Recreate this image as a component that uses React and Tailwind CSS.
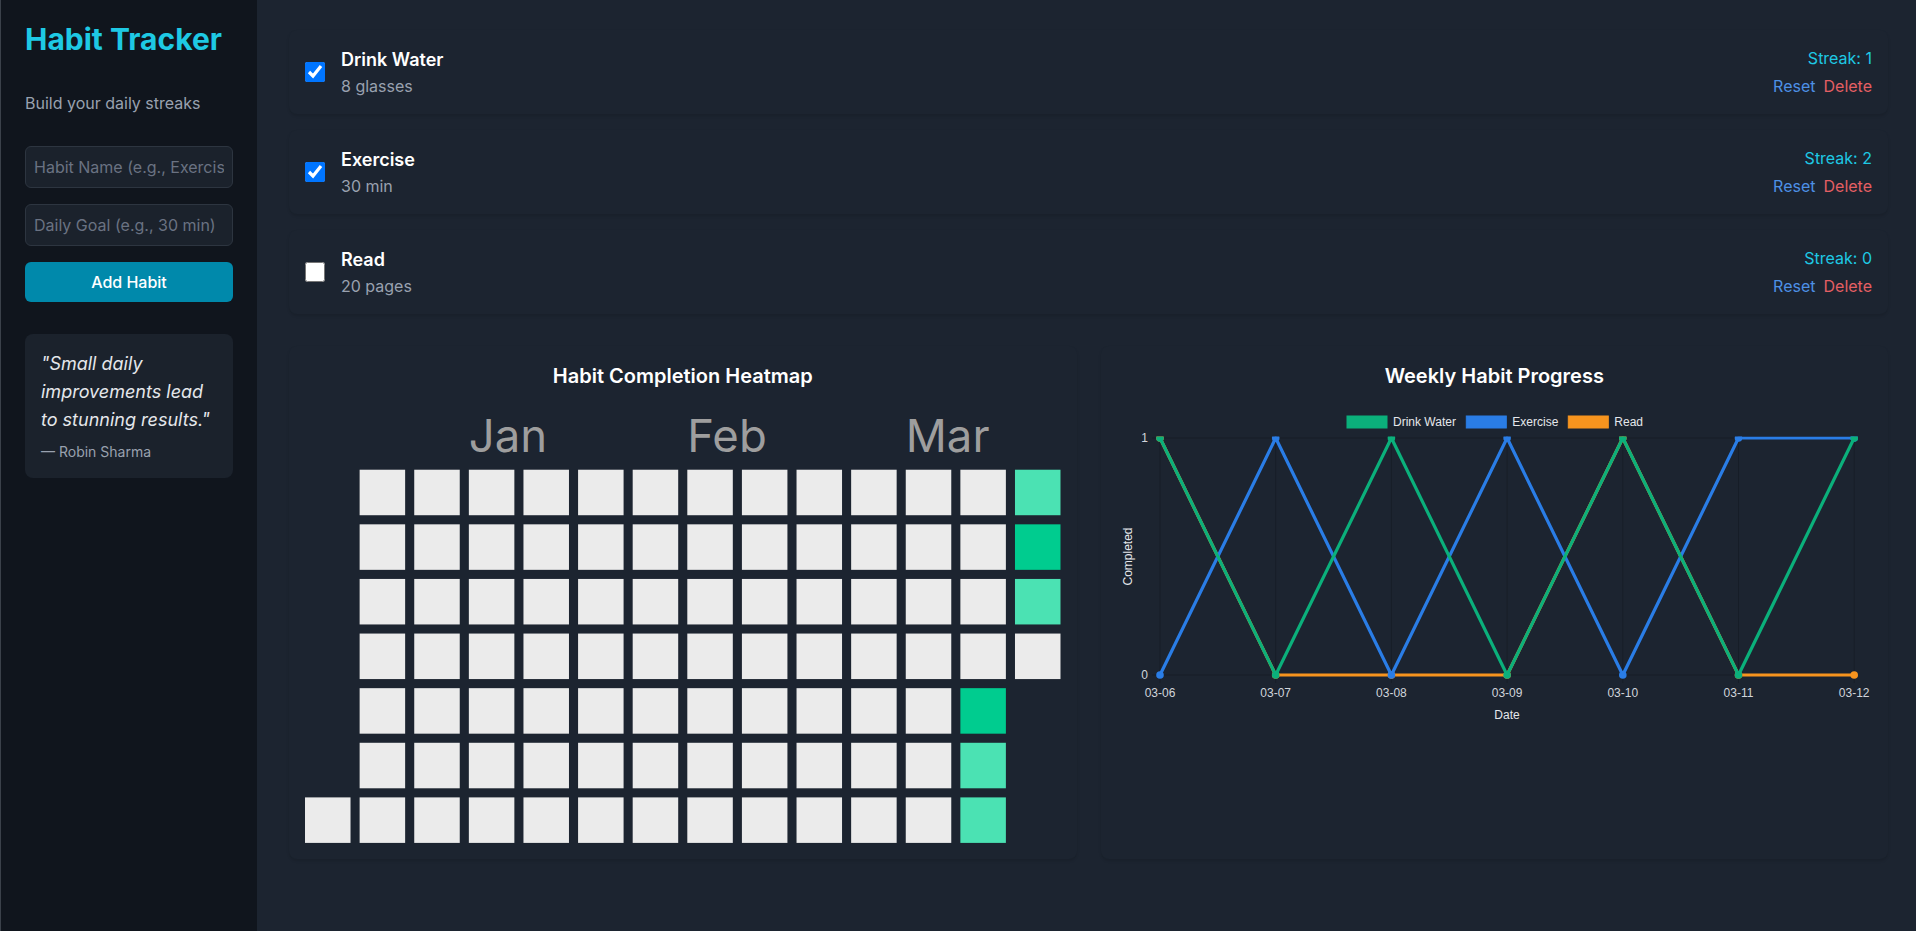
import React, { useState } from "react";

const initialHabits = [
    { id: 1, name: "Drink Water", goal: "8 glasses", streak: 1, done: true },
    { id: 2, name: "Exercise", goal: "30 min", streak: 2, done: true },
    { id: 3, name: "Read", goal: "20 pages", streak: 0, done: false },
];

// heatmap: 14 week columns, 7 day rows
const greens = {
    "12-4": "#00cc8f",
    "12-5": "#4be2b3",
    "12-6": "#4be2b3",
    "13-0": "#4be2b3",
    "13-1": "#00cc8f",
    "13-2": "#4be2b3",
};

const Heatmap = () => {
    const cells = [];
    for (let col = 0; col < 14; col++) {
        for (let row = 0; row < 7; row++) {
            if (col === 0 && row < 6) continue;
            if (col === 13 && row > 3) continue;
            cells.push(
                <rect
                    key={`${col}-${row}`}
                    x={col * 12}
                    y={14 + row * 12}
                    width="10"
                    height="10"
                    fill={greens[`${col}-${row}`] || "#ebebeb"}
                />
            );
        }
    }
    return (
        <svg viewBox="0 0 166 96" className="block w-full">
            <text x="36" y="10" fontSize="10" fill="#9e9e9e">Jan</text>
            <text x="84" y="10" fontSize="10" fill="#9e9e9e">Feb</text>
            <text x="132" y="10" fontSize="10" fill="#9e9e9e">Mar</text>
            {cells}
        </svg>
    );
};

const dates = ["03-06", "03-07", "03-08", "03-09", "03-10", "03-11", "03-12"];
const xs = dates.map((_, i) => 43 + i * 115.7);
const yOf = (v) => (v ? 32 : 269);

const series = [
    { label: "Read", color: "#f7941e", data: [1, 0, 0, 0, 1, 0, 0] },
    { label: "Exercise", color: "#2a7de6", data: [0, 1, 0, 1, 0, 1, 1] },
    { label: "Drink Water", color: "#0bb07b", data: [1, 0, 1, 0, 1, 0, 1] },
];

const legend = [
    { label: "Drink Water", color: "#0bb07b", x: 230 },
    { label: "Exercise", color: "#2a7de6", x: 349.3 },
    { label: "Read", color: "#f7941e", x: 451.3 },
];

const LineChart = () => (
    <svg width="756" height="378" viewBox="0 0 756 378" className="block" fontFamily="'Liberation Sans', Arial, sans-serif">
        <defs>
            <clipPath id="plotclip">
                <rect x="0" y="30.5" width="756" height="340" />
            </clipPath>
        </defs>
        {/* legend */}
        {legend.map((l) => (
            <g key={l.label}>
                <rect x={l.x} y="10" width="40" height="12" fill={l.color} stroke={l.color} strokeWidth="1" />
                <text x={l.x + 46} y="16" dominantBaseline="central" fontSize="12" fill="#e5e7eb">{l.label}</text>
            </g>
        ))}
        {/* grid */}
        {xs.map((x) => (
            <line key={x} x1={x} x2={x} y1="32" y2="277" stroke="rgba(0,0,0,0.18)" strokeWidth="1" />
        ))}
        <line x1="35" x2="737.2" y1="32" y2="32" stroke="rgba(0,0,0,0.18)" />
        <line x1="35" x2="737.2" y1="269" y2="269" stroke="rgba(0,0,0,0.18)" />
        {/* y ticks */}
        <text x="31" y="32" textAnchor="end" dominantBaseline="central" fontSize="12" fill="#d1d5db">1</text>
        <text x="31" y="269" textAnchor="end" dominantBaseline="central" fontSize="12" fill="#d1d5db">0</text>
        <text
            x="10.7"
            y="150.5"
            textAnchor="middle"
            dominantBaseline="central"
            fontSize="12"
            fill="#e5e7eb"
            transform="rotate(-90 10.7 150.5)"
        >
            Completed
        </text>
        {/* x ticks */}
        {dates.map((d, i) => (
            <text key={d} x={xs[i]} y="287" textAnchor="middle" dominantBaseline="central" fontSize="12" fill="#d1d5db">{d}</text>
        ))}
        <text x="390" y="309" textAnchor="middle" dominantBaseline="central" fontSize="12" fill="#e5e7eb">Date</text>
        {/* data */}
        <g clipPath="url(#plotclip)">
            {series.map((s) => (
                <g key={s.label}>
                    <polyline
                        points={s.data.map((v, i) => `${xs[i]},${yOf(v)}`).join(" ")}
                        fill="none"
                        stroke={s.color}
                        strokeWidth="3.2"
                        strokeLinejoin="round"
                    />
                    {s.data.map((v, i) => (
                        <circle key={i} cx={xs[i]} cy={yOf(v)} r="3.8" fill={s.color} />
                    ))}
                </g>
            ))}
        </g>
    </svg>
);

const App = () => {
    const [habits, setHabits] = useState(initialHabits);
    const [name, setName] = useState("");
    const [goal, setGoal] = useState("");

    const toggle = (id) => {
        setHabits((prev) => prev.map((h) => (h.id === id ? { ...h, done: !h.done } : h)));
    };

    const addHabit = () => {
        if (!name.trim()) return;
        setHabits((prev) => [...prev, { id: Date.now(), name, goal, streak: 0, done: false }]);
        setName("");
        setGoal("");
    };

    return (
        <div className="flex min-h-screen border-l border-[#3b414a] font-['Inter',sans-serif]">
            {/* Sidebar */}
            <aside className="w-64 shrink-0 bg-[#10151d] px-6 pt-[21px]">
                <h1 className="text-3xl leading-9 font-bold text-[#1ec9e4]">Habit Tracker</h1>
                <p className="mt-[34px] text-base leading-6 text-gray-400">Build your daily streaks</p>

                <div className="mt-[31px] space-y-4">
                    <input
                        type="text"
                        value={name}
                        onChange={(e) => setName(e.target.value)}
                        placeholder="Habit Name (e.g., Exercise)"
                        className="block w-full px-2 py-2 text-base leading-6 text-white bg-[#1b222c] border border-[#2d3540] rounded-md placeholder:text-gray-500 focus:outline-none"
                    />
                    <input
                        type="text"
                        value={goal}
                        onChange={(e) => setGoal(e.target.value)}
                        placeholder="Daily Goal (e.g., 30 min)"
                        className="block w-full px-2 py-2 text-base leading-6 text-white bg-[#1b222c] border border-[#2d3540] rounded-md placeholder:text-gray-500 focus:outline-none"
                    />
                    <button
                        type="button"
                        onClick={addHabit}
                        className="block w-full py-2 text-base leading-6 font-medium text-white bg-[#0089ab] rounded-md"
                    >
                        Add Habit
                    </button>
                </div>

                <div className="mt-8 p-4 bg-[#1b222c] rounded-lg">
                    <p className="text-lg leading-7 italic text-gray-200">
                        "Small daily improvements lead to stunning results."
                    </p>
                    <p className="mt-2 text-sm leading-5 text-gray-400">— Robin Sharma</p>
                </div>
            </aside>

            {/* Main */}
            <main className="flex-1 bg-[#1c2430] pl-8 pr-7 pt-[30px] pb-8">
                <div className="space-y-4">
                    {habits.map((h) => (
                        <div key={h.id} className="flex items-center justify-between p-4 bg-[#1c2430] rounded-lg shadow-[0_2px_3px_rgba(0,0,0,0.12)]">
                            <div className="flex items-center gap-4">
                                <input
                                    type="checkbox"
                                    checked={h.done}
                                    onChange={() => toggle(h.id)}
                                    className="w-5 h-5"
                                />
                                <div>
                                    <div className="text-lg leading-7 font-semibold text-white">{h.name}</div>
                                    <div className="text-base leading-6 text-gray-400">{h.goal}</div>
                                </div>
                            </div>
                            <div className="text-right">
                                <div className="text-base leading-6 text-[#1ec9e4]">Streak: {h.streak}</div>
                                <div className="mt-1 flex justify-end gap-2 text-base leading-6">
                                    <button type="button" className="text-[#4d90e6]">Reset</button>
                                    <button type="button" className="text-[#e45f63]">Delete</button>
                                </div>
                            </div>
                        </div>
                    ))}
                </div>

                <div className="mt-8 grid grid-cols-2 gap-6">
                    <div className="p-4 bg-[#1c2430] rounded-lg shadow-[0_2px_3px_rgba(0,0,0,0.12)]">
                        <h2 className="mb-4 text-xl leading-7 font-semibold text-center text-white">Habit Completion Heatmap</h2>
                        <Heatmap />
                    </div>
                    <div className="p-4 bg-[#1c2430] rounded-lg shadow-[0_2px_3px_rgba(0,0,0,0.12)]">
                        <h2 className="mb-4 text-xl leading-7 font-semibold text-center text-white">Weekly Habit Progress</h2>
                        <LineChart />
                    </div>
                </div>
            </main>
        </div>
    );
};

export default App;
